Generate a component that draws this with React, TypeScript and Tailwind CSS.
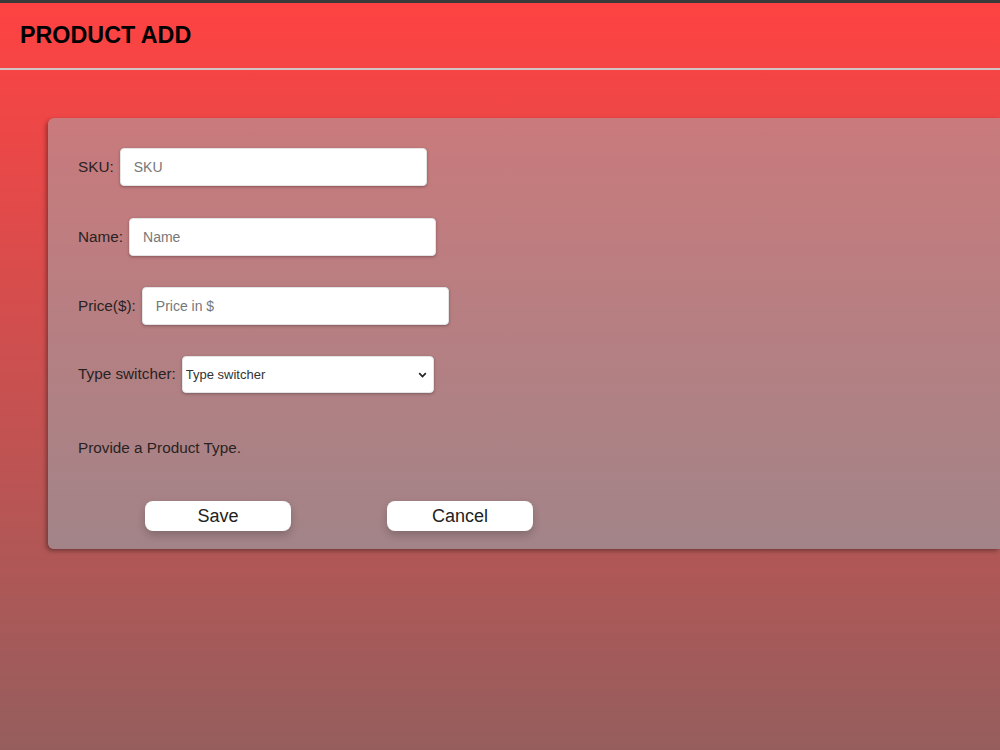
import { useState } from "react";

const font = { fontFamily: '"Liberation Sans", Arial, sans-serif' };

function Field({ label, placeholder }: { label: string; placeholder: string }) {
  return (
    <div className="flex items-center gap-[6px]">
      <label className="text-[15.3px] text-[#2a2222]">{label}</label>
      <input
        placeholder={placeholder}
        className="w-[307px] h-[38px] rounded-[4px] bg-white border border-[#e4e4e4] px-[13px] text-[14px] text-[#333] placeholder:text-[#777] shadow-[0_1px_3px_rgba(0,0,0,0.3)] outline-none"
      />
    </div>
  );
}

export default function App() {
  const [type, setType] = useState("");

  return (
    <div
      style={font}
      className="w-full h-[750px] overflow-hidden flex flex-col bg-[linear-gradient(180deg,#ff4242_0%,#955e5d_100%)]"
    >
      <header className="h-[70px] shrink-0 border-t-[3px] border-t-[#3a3a3a] border-b-2 border-b-[#d2c4c4] flex items-center px-[20px]">
        <h1 className="text-[23.3px] font-bold text-black">PRODUCT ADD</h1>
      </header>

      <div className="flex mt-[48px] ml-[48px]">
        <form
          onSubmit={(e) => e.preventDefault()}
          className="flex-1 flex flex-col rounded-l-[6px] bg-[linear-gradient(180deg,#c97a7c_0%,#a28488_100%)] shadow-[-2px_2px_4px_rgba(0,0,0,0.35)] pl-[30px] pt-[30px] pb-[18px]"
        >
          <Field label="SKU:" placeholder="SKU" />
          <div className="mt-[32px]">
            <Field label="Name:" placeholder="Name" />
          </div>
          <div className="mt-[31px]">
            <Field label="Price($):" placeholder="Price in $" />
          </div>

          <div className="mt-[31px] flex items-center gap-[6px]">
            <label className="text-[15.3px] text-[#2a2222]">Type switcher:</label>
            <div className="relative">
              <select
                value={type}
                onChange={(e) => setType(e.target.value)}
                className="appearance-none w-[252px] h-[37px] rounded-[4px] bg-white border border-[#e4e4e4] pl-[3px] pr-[24px] text-[13px] text-[#333] shadow-[0_1px_3px_rgba(0,0,0,0.3)] outline-none"
              >
                <option value="">Type switcher</option>
                <option value="DVD">DVD</option>
                <option value="Book">Book</option>
                <option value="Furniture">Furniture</option>
              </select>
              <svg
                className="absolute right-[7px] top-[16px] pointer-events-none"
                width="9"
                height="6"
                viewBox="0 0 9 6"
              >
                <path d="M1.2 1.2 L4.5 4.5 L7.8 1.2" fill="none" stroke="#222" strokeWidth="1.7" />
              </svg>
            </div>
          </div>

          <p className="mt-[46px] text-[15.3px] text-[#2a2222] leading-[18px]">Provide a Product Type.</p>

          <div className="mt-[44px] flex ml-[67px] gap-[96px]">
            <button className="w-[146px] h-[30px] rounded-[8px] bg-white text-[18px] text-[#222] shadow-[0_4px_8px_rgba(0,0,0,0.2)]">
              Save
            </button>
            <button
              type="button"
              className="w-[146px] h-[30px] rounded-[8px] bg-white text-[18px] text-[#222] shadow-[0_4px_8px_rgba(0,0,0,0.2)]"
            >
              Cancel
            </button>
          </div>
        </form>
      </div>
    </div>
  );
}
